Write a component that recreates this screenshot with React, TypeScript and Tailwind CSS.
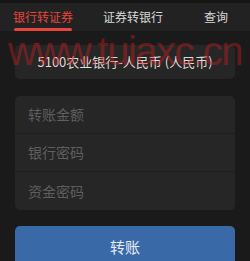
export default function App() {
  const fields = ["转账金额", "银行密码", "资金密码"];
  return (
    <div
      className="relative w-[250px] h-[261px] overflow-hidden bg-[#1a1a1a] text-[#d8d8d8]"
      style={{ fontFamily: '"Noto Sans CJK SC", "Noto Sans", sans-serif' }}
    >
      <div className="h-[3px] bg-[#161616]" />
      <div className="flex h-[28px] items-stretch whitespace-nowrap bg-[#222222] text-[12px]">
        <div className="relative ml-[13px] flex w-[60px] flex-col items-center justify-center">
          <span className="text-[#e8453c] leading-none">银行转证券</span>
          <div className="absolute bottom-[0px] left-[1px] right-[1px] h-[3px] rounded-full bg-[#e8453c]" />
        </div>
        <div className="ml-[30px] flex items-center leading-none">证券转银行</div>
        <div className="ml-auto mr-[22px] flex items-center leading-none">查询</div>
      </div>

      <div className="px-[15px] pt-[14px]">
        <div className="flex h-[34px] items-center justify-center whitespace-nowrap rounded-[5px] bg-[#262626] text-[13px] text-[#dcdcdc]">
          5100农业银行-人民币 (人民币)
        </div>

        <div className="mt-[17px] rounded-[5px] bg-[#262626]">
          {fields.map((f, i) => (
            <div
              key={f}
              className={`flex h-[38px] items-center pl-[13px] text-[14px] text-[#5e5e5e] ${
                i < fields.length - 1 ? "border-b border-[#1e1e1e]" : ""
              }`}
            >
              {f}
            </div>
          ))}
        </div>

        <button className="mt-[16px] flex h-[44px] w-full items-start justify-center rounded-[5px] bg-[#3a69a8] pt-[10px] text-[15px] text-[#e6ecf4]">
          转账
        </button>
      </div>

      <div
        className="pointer-events-none absolute left-[8px] top-[31px] whitespace-nowrap text-[40px] leading-none tracking-[-1.5px] text-[#c81e1e]/45"
        style={{ fontFamily: '"Liberation Sans", sans-serif' }}
      >
        www.tuiaxc.cn
      </div>
    </div>
  );
}
